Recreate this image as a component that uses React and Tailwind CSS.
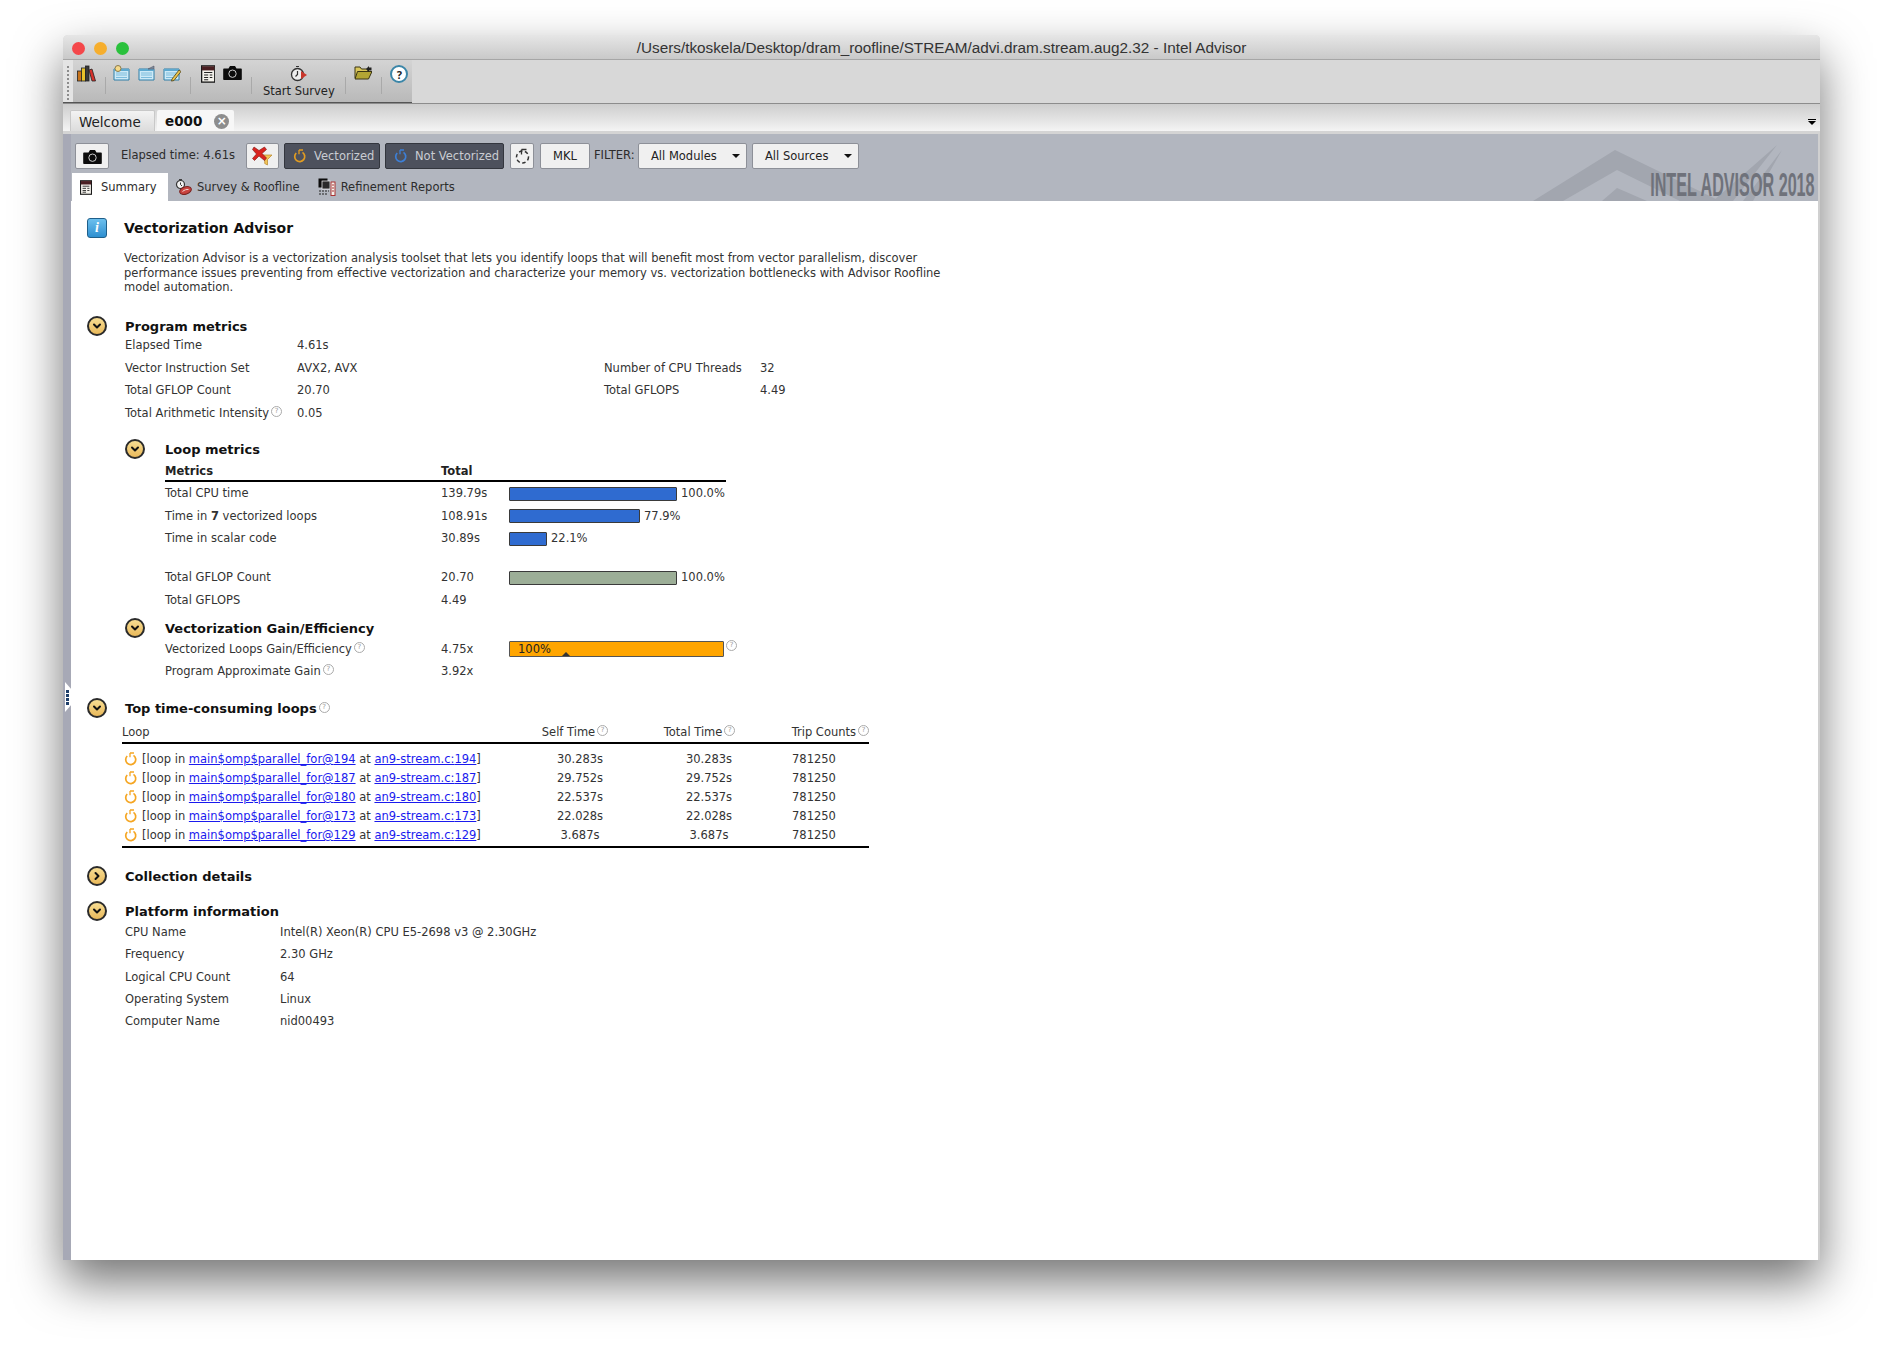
import { ChevronDown, ChevronRight } from "lucide-react";

const sans = "font-['DejaVu_Sans','Liberation_Sans',sans-serif]";

function Toggle({ open = true }) {
  return (
    <span className="-mt-[2px] flex h-[20px] w-[20px] shrink-0 items-center justify-center rounded-full border-2 border-[#2b2b2b] bg-gradient-to-b from-[#f7dd92] to-[#e9b95a]">
      {open ? (
        <ChevronDown size={12} strokeWidth={4} color="#111" />
      ) : (
        <ChevronRight size={12} strokeWidth={4} color="#111" />
      )}
    </span>
  );
}

function Help() {
  return (
    <span className="relative -top-[4px] ml-[2px] inline-flex h-[11px] w-[11px] items-center justify-center rounded-full border border-[#aaa] text-[7px] font-normal leading-none text-[#999]">
      ?
    </span>
  );
}

function LoopIcon({ color = "#f5a623", size = 14 }) {
  return (
    <svg width={size} height={size} viewBox="0 0 14 14" fill="none" stroke={color} strokeWidth="1.7">
      <path d="M9.500 3.400a5 5 0 1 1-6.300 .6" />
      <path d="M6 1h4M6 1v4.300" strokeWidth="1.300" />
    </svg>
  );
}

function RefreshIcon() {
  return (
    <svg width="17" height="17" viewBox="0 0 17 17" fill="none" stroke="#333" strokeWidth="1.500">
      <circle cx="8.500" cy="9" r="6" strokeDasharray="3.500 2.500" />
      <path d="M7.500 1.500h5M7.500 1.500v5" strokeWidth="1.300" />
    </svg>
  );
}

function Books() {
  return (
    <svg width="19" height="17" viewBox="0 0 19 17">
      <rect x="0.5" y="6" width="4" height="10" fill="#c8741c" stroke="#222" strokeWidth=".8" />
      <rect x="4.5" y="3" width="4" height="13" fill="#e8c22a" stroke="#222" strokeWidth=".8" />
      <rect x="8.5" y="1" width="3.5" height="15" fill="#3a3a3a" stroke="#222" strokeWidth=".8" />
      <path d="M12 5l3-1 3.500 12h-3.500z" fill="#d8322c" stroke="#222" strokeWidth=".8" />
    </svg>
  );
}

function ProjectIcon({ variant }) {
  return (
    <svg width="18" height="17" viewBox="0 0 18 17">
      <path d="M1 4h15v11H1z" fill="#cdeaf7" stroke="#2f7fa8" />
      <path d="M1 4h15v2H1z" fill="#5ea9cf" />
      <path d="M3 8h11M3 10h11M3 12.500h11" stroke="#7dbcdc" />
      {variant === 0 && <circle cx="5" cy="3.500" r="3" fill="#f5d98a" stroke="#8a7a4c" />}
      {variant === 1 && <path d="M10 4l6-3v3z" fill="#7c8fa0" stroke="#556" strokeWidth=".6" />}
      {variant === 2 && <path d="M9 14l7-9 2 1.500-7 9-2.500.6z" fill="#eac44a" stroke="#4b4016" strokeWidth=".8" />}
    </svg>
  );
}

function DocIcon({ size = 17 }) {
  return (
    <svg width={size * 0.8} height={size} viewBox="0 0 14 17">
      <rect x=".6" y=".6" width="12.800" height="15.800" fill="#f4f2ec" stroke="#1a1a1a" strokeWidth="1.300" />
      <rect x="1" y="1" width="12" height="4" fill="#4a1f22" />
      <path d="M3 7h8M3 9.500h4M8.500 9.500H11M3 12h4M8.500 12H11M3 14h4" stroke="#222" />
    </svg>
  );
}

function CameraIcon() {
  return (
    <svg width="19" height="15" viewBox="0 0 19 15">
      <path d="M1 3.500h4.500L7 1h5l1.500 2.500H18a.8.8 0 0 1 .8.8v9.900a.8.8 0 0 1-.8.8H1a.8.8 0 0 1-.8-.8V4.300a.8.8 0 0 1 .8-.8z" fill="#0c0c0c" />
      <circle cx="9.500" cy="8.700" r="3.700" fill="#0c0c0c" stroke="#ccc" strokeWidth="1" />
    </svg>
  );
}

function StopwatchIcon() {
  return (
    <svg width="18" height="17" viewBox="0 0 18 17" fill="none">
      <circle cx="7.500" cy="9.500" r="6" fill="#eee" stroke="#333" strokeWidth="1.300" />
      <path d="M7.500 6v3.500l-2 2M6 1.500h3" stroke="#333" strokeWidth="1.200" />
      <path d="M11 6l6 4-6 4z" fill="#c9362b" />
    </svg>
  );
}

function SurveyIcon() {
  return (
    <svg width="17" height="17" viewBox="0 0 17 17" fill="none">
      <circle cx="5.500" cy="5.500" r="4" fill="#f2f2f2" stroke="#333" strokeWidth="1.200" />
      <path d="M5.500 3.500v2l1.500 1.500M4 .6h3" stroke="#333" />
      <ellipse cx="10.500" cy="11.500" rx="6" ry="3.600" transform="rotate(-18 10.500 11.500)" fill="#c9433f" stroke="#7a2320" />
      <path d="M7.500 12.500c2-1.700 4-2.200 6-2" stroke="#f3d3d0" />
    </svg>
  );
}

function ReportsIcon() {
  return (
    <svg width="18" height="18" viewBox="0 0 18 18">
      <rect x="0.5" y="0.5" width="9" height="9" fill="#0c0c0c" />
      <rect x="4" y="3" width="8" height="8" fill="#2a2a2a" stroke="#fff" strokeWidth=".7" />
      <path d="M1 13h10M1 16h9" stroke="#222" strokeWidth="1.200" strokeDasharray="2 1" />
      <rect x="13" y="4" width="4" height="13.500" fill="#f4f2ec" stroke="#a33" />
      <path d="M14 7h2M14 10h2M14 13h2" stroke="#a33" />
    </svg>
  );
}

function FolderIcon() {
  return (
    <svg width="18" height="15" viewBox="0 0 18 15">
      <path d="M1 2h5l1.500 2H14v9H1z" fill="#d9c65c" stroke="#3a3514" />
      <path d="M3.500 6.500H18L14.500 14H1z" fill="#b3a534" stroke="#3a3514" />
      <path d="M12 4l3-3v1.500h2.500v3H15V7z" fill="#222" />
    </svg>
  );
}

function Sep() {
  return <span className="block h-[17px] w-px shrink-0 bg-[#a9a9a9]" />;
}

function Toolbar() {
  return (
    <div className="flex h-[44px] border-b border-[#8c8c8c] bg-[#d8d8d8]">
      <div className="flex w-[349px] shrink-0 border-b border-[#555] bg-gradient-to-b from-[#d4d4d4] to-[#b9b9b9]">
        <div className="flex w-[10px] shrink-0 flex-col items-center gap-[2px] bg-[#e4e4e4] pt-[6px]">
          {[0, 1, 2, 3, 4, 5, 6, 7, 8].map((i) => (
            <span key={i} className="h-[2px] w-[2px] bg-[#8c8c8c]" />
          ))}
        </div>
        <div className="flex items-start pl-[4px] pt-[5px]">
          <Books />
          <div className="ml-[9px] mt-[12px]"><Sep /></div>
          <div className="ml-[7px] flex gap-[7px]">
            <ProjectIcon variant={0} />
            <ProjectIcon variant={1} />
            <ProjectIcon variant={2} />
          </div>
          <div className="ml-[9px] mt-[12px]"><Sep /></div>
          <div className="ml-[10px]"><DocIcon size={18} /></div>
          <div className="ml-[8px]"><CameraIcon /></div>
          <div className="ml-[9px] mt-[12px]"><Sep /></div>
          <div className="flex w-[93px] flex-col items-center">
            <StopwatchIcon />
            <span className={`${sans} mt-[2px] text-[11.500px] leading-[14px] text-[#222]`}>Start Survey</span>
          </div>
          <div className="mt-[12px]"><Sep /></div>
          <div className="ml-[8px]"><FolderIcon /></div>
          <div className="ml-[9px] mt-[12px]"><Sep /></div>
          <span className="ml-[8px] flex h-[18px] w-[18px] items-center justify-center rounded-full border-2 border-[#3b86a8] bg-white text-[11px] font-bold leading-none text-[#222]">
            ?
          </span>
        </div>
      </div>
    </div>
  );
}

function Tabs() {
  return (
    <div className="flex h-[30px] items-end justify-between border-b-[3px] border-[#d4d4d4] bg-gradient-to-b from-[#cdcdcd] to-[#f4f4f4] pl-[7px] pr-[4px]">
      <div className="flex gap-[2px]">
        <div className={`${sans} flex h-[21px] w-[85px] items-center rounded-t-[2px] border border-b-0 border-[#c8c8c8] bg-gradient-to-b from-[#f3f3f3] to-[#dcdcdc] pl-[8px] pt-[2px] text-[13.500px] text-[#222]`}>
          Welcome
        </div>
        <div className={`${sans} flex h-[21px] w-[77px] items-center gap-[12px] rounded-t-[2px] bg-[#f7f7f7] pl-[8px] pt-[1px] text-[13.500px] font-bold text-[#111]`}>
          e000
          <span className="flex h-[15px] w-[15px] items-center justify-center rounded-full bg-[#8d8d8d] text-[12px] font-bold leading-none text-white">×</span>
        </div>
      </div>
      <div className="mb-[6px] flex flex-col items-center gap-[1px]">
        <span className="h-[1px] w-[8px] bg-black" />
        <span className="h-0 w-0 border-x-[4px] border-t-[4px] border-x-transparent border-t-black" />
      </div>
    </div>
  );
}

function Btn({ className, children }) {
  return (
    <div className={`flex h-[26px] items-center justify-center rounded-[2px] border border-[#8d9098] bg-[#f0f0f0] ${className}`}>
      {children}
    </div>
  );
}

function FilterFunnel() {
  return (
    <svg width="21" height="20" viewBox="0 0 21 20">
      <path d="M8 9h12l-4.500 4.500V19l-2.800-1.500v-4z" fill="#f2c458" stroke="#b7862a" strokeWidth=".7" />
      <path d="M2 1l5 3.500L12.500 1l2 2.500-4.500 4 4.500 4.500-2 2.500L7 10l-4.500 4.500-2-2L4.500 8 .5 3.500z" fill="#d9231f" stroke="#7a1512" strokeWidth=".6" />
    </svg>
  );
}

function Dropdown({ label, className }) {
  return (
    <Btn className={`${className} pl-[12px] pr-[6px] text-[11.500px] text-[#222]`}>
      <span className={`${sans} pt-[1px]`}>{label}</span>
      <span className="ml-auto h-0 w-0 border-x-[4px] border-t-[4px] border-x-transparent border-t-[#111]" />
    </Btn>
  );
}

function Logo() {
  return (
    <div className="pointer-events-none absolute bottom-0 right-0 h-[67px] w-[300px]">
      <svg className="absolute inset-0" width="300" height="67" viewBox="0 0 300 67" fill="none">
        <path d="M15 67L97 16L202 67H162L99 36L45 67z" fill="#a2a6af" />
        <path d="M84 67L99 54L129 67z" fill="#a2a6af" />
        <path d="M259 11L195 67H215zM264 16L225 67H235z" fill="#a2a6af" />
      </svg>
      <span className="absolute bottom-[0px] right-[3px] origin-right scale-x-[0.49] whitespace-nowrap font-['Liberation_Sans',sans-serif] text-[33px] font-bold leading-none text-[#6f727b]">
        INTEL ADVISOR 2018
      </span>
    </div>
  );
}

function ResultBar() {
  return (
    <div className="relative h-[67px] bg-[#b2b6bf]">
      <Logo />
      <div className="flex h-[35px] items-end pl-[4px]">
        <Btn className="w-[34px]"><CameraIcon /></Btn>
        <span className={`${sans} ml-[12px] w-[125px] self-end pb-[5px] text-[11.500px] text-[#2c2c2c]`}>Elapsed time: 4.61s</span>
        <Btn className="w-[33px]"><FilterFunnel /></Btn>
        <div className={`${sans} ml-[5px] flex h-[26px] w-[96px] items-center gap-[7px] rounded-[2px] border border-[#33363e] bg-[#4d515d] pl-[8px] text-[11.500px] text-[#c9ccd2]`}>
          <LoopIcon color="#e19c22" /> <span className="pt-[2px]">Vectorized</span>
        </div>
        <div className={`${sans} ml-[5px] flex h-[26px] w-[119px] items-center gap-[7px] rounded-[2px] border border-[#33363e] bg-[#4d515d] pl-[8px] text-[11.500px] text-[#c9ccd2]`}>
          <LoopIcon color="#3d7fd6" /> <span className="pt-[2px]">Not Vectorized</span>
        </div>
        <Btn className="ml-[6px] w-[24px]"><RefreshIcon /></Btn>
        <Btn className={`${sans} ml-[6px] w-[50px] pt-[1px] text-[11.500px] text-[#222]`}>MKL</Btn>
        <span className={`${sans} ml-[4px] w-[44px] self-end pb-[5px] text-[11.500px] text-[#2c2c2c]`}>FILTER:</span>
        <Dropdown label="All Modules" className="w-[109px]" />
        <Dropdown label="All Sources" className="ml-[5px] w-[107px]" />
      </div>
      <div className={`${sans} relative mt-[4px] flex h-[28px] items-center pl-[1px] text-[11.500px] text-[#2c2c2c]`}>
        <div className="flex h-[28px] w-[96px] items-center bg-white pl-[8px]">
          <DocIcon size={15} />
          <span className="ml-[9px] pt-[2px]">Summary</span>
        </div>
        <div className="ml-[7px] flex items-center">
          <SurveyIcon />
          <span className="ml-[5px] pt-[2px]">Survey &amp; Roofline</span>
        </div>
        <div className="ml-[18px] flex items-center">
          <ReportsIcon />
          <span className="ml-[5px] pt-[2px]">Refinement Reports</span>
        </div>
      </div>
    </div>
  );
}

function Heading({ children, className = "" }) {
  return <h2 className={`${sans} text-[13px] font-bold leading-[18px] text-[#111] ${className}`}>{children}</h2>;
}

function Row({ label, value, children, labelClass = "w-[172px]" }) {
  return (
    <div className="flex h-[22.4px] items-center">
      <span className={`${labelClass} shrink-0`}>{label}</span>
      <span className="w-[307px] shrink-0">{value}</span>
      {children}
    </div>
  );
}

function Bar({ width, color = "bg-[#2f6bd0]", pct }) {
  return (
    <div className="flex items-center">
      <span className={`h-[14px] rounded-[1px] border border-[#3a3a3a] ${color}`} style={{ width }} />
      <span className="ml-[4px]">{pct}</span>
    </div>
  );
}

function MetricRow({ label, value, bar }) {
  return (
    <div className="flex h-[22.7px] items-center">
      <span className="w-[276px] shrink-0">{label}</span>
      <span className="w-[68px] shrink-0">{value}</span>
      {bar}
    </div>
  );
}

const loops = [
  ["194", "30.283s"],
  ["187", "29.752s"],
  ["180", "22.537s"],
  ["173", "22.028s"],
  ["129", "3.687s"],
];

function LoopsTable() {
  return (
    <div className="ml-[35px] mt-[4px] w-[747px]">
      <div className="flex h-[22px] items-center whitespace-nowrap border-b-2 border-black">
        <span className="w-[420px]">Loop</span>
        <span className="w-[122px]">Self Time<Help /></span>
        <span className="w-[128px]">Total Time<Help /></span>
        <span>Trip Counts<Help /></span>
      </div>
      <div className="border-b-2 border-black pb-[1px] pt-[6px]">
        {loops.map(([line, time]) => (
          <div key={line} className="flex h-[19px] items-center">
            <span className="-mt-[2px] ml-[2px] w-[18px] shrink-0"><LoopIcon /></span>
            <span className="w-[400px] shrink-0 text-[#333]">
              [loop in <a className="text-[#1a1aee] underline">main$omp$parallel_for@{line}</a> at{" "}
              <a className="text-[#1a1aee] underline">an9-stream.c:{line}</a>]
            </span>
            <span className="w-[122px] shrink-0"><span className="block w-[76px] text-center">{time}</span></span>
            <span className="w-[128px] shrink-0"><span className="block w-[90px] text-center">{time}</span></span>
            <span>781250</span>
          </div>
        ))}
      </div>
    </div>
  );
}

function Content() {
  return (
    <div className={`${sans} flex-1 bg-white pl-[16px] pt-[17px] text-[11.500px] text-[#333]`}>
      <div className="flex items-center">
        <span className="flex h-[20px] w-[20px] items-center justify-center rounded-[3px] border border-[#1f5f8a] bg-gradient-to-b from-[#6cc0ee] to-[#2c8fd0] font-['Liberation_Serif',serif] text-[14px] font-bold italic leading-none text-white">i</span>
        <h1 className="ml-[17px] text-[14px] font-bold leading-[18px] text-[#111]">Vectorization Advisor</h1>
      </div>
      <p className="ml-[37px] mt-[13px] w-[840px] leading-[14.6px]">
        Vectorization Advisor is a vectorization analysis toolset that lets you identify loops that will benefit most from vector parallelism, discover performance issues preventing from effective vectorization and characterize your memory vs. vectorization bottlenecks with Advisor Roofline model automation.
      </p>

      <div className="mt-[23px] flex items-center">
        <Toggle />
        <Heading className="ml-[18px]">Program metrics</Heading>
      </div>
      <div className="-mt-[1px] ml-[38px]">
        <Row label="Elapsed Time" value="4.61s" />
        <Row label="Vector Instruction Set" value="AVX2, AVX">
          <span className="w-[156px]">Number of CPU Threads</span>
          <span>32</span>
        </Row>
        <Row label="Total GFLOP Count" value="20.70">
          <span className="w-[156px]">Total GFLOPS</span>
          <span>4.49</span>
        </Row>
        <Row label={<>Total Arithmetic Intensity<Help /></>} value="0.05" />
      </div>

      <div className="ml-[38px] mt-[17px] flex items-center">
        <Toggle />
        <Heading className="ml-[20px]">Loop metrics</Heading>
      </div>
      <div className="ml-[78px] w-[561px]">
        <div className="mt-[3px] flex h-[20px] items-center border-b-2 border-black font-bold text-[#222]">
          <span className="w-[276px]">Metrics</span>
          <span>Total</span>
        </div>
        <MetricRow label="Total CPU time" value="139.79s" bar={<Bar width={168} pct="100.0%" />} />
        <MetricRow label={<>Time in <b>7</b> vectorized loops</>} value="108.91s" bar={<Bar width={131} pct="77.9%" />} />
        <MetricRow label="Time in scalar code" value="30.89s" bar={<Bar width={38} pct="22.1%" />} />
        <div className="h-[16px]" />
        <MetricRow label="Total GFLOP Count" value="20.70" bar={<Bar width={168} color="bg-[#9cae97]" pct="100.0%" />} />
        <MetricRow label="Total GFLOPS" value="4.49" />
      </div>

      <div className="ml-[38px] mt-[8px] flex items-center">
        <Toggle />
        <Heading className="ml-[20px]">Vectorization Gain/Efficiency</Heading>
      </div>
      <div className="ml-[78px]">
        <MetricRow
          label={<>Vectorized Loops Gain/Efficiency<Help /></>}
          value="4.75x"
          bar={
            <div className="flex items-center">
              <div className="relative flex h-[16px] w-[215px] items-center rounded-[1px] border border-[#555] bg-[#ffa500] pl-[8px] text-[#222]">
                100%
                <span className="absolute bottom-0 left-[52px] h-0 w-0 border-x-[4px] border-b-[4px] border-x-transparent border-b-[#333]" />
              </div>
              <Help />
            </div>
          }
        />
        <MetricRow label={<>Program Approximate Gain<Help /></>} value="3.92x" />
      </div>

      <div className="mt-[17px] flex items-center">
        <Toggle />
        <Heading className="ml-[18px]">Top time-consuming loops<Help /></Heading>
      </div>
      <LoopsTable />

      <div className="mt-[20px] flex items-center">
        <Toggle open={false} />
        <Heading className="ml-[18px]">Collection details</Heading>
      </div>
      <div className="mt-[17px] flex items-center">
        <Toggle />
        <Heading className="ml-[18px]">Platform information</Heading>
      </div>
      <div className="ml-[38px]">
        <Row labelClass="w-[155px]" label="CPU Name" value="Intel(R) Xeon(R) CPU E5-2698 v3 @ 2.30GHz" />
        <Row labelClass="w-[155px]" label="Frequency" value="2.30 GHz" />
        <Row labelClass="w-[155px]" label="Logical CPU Count" value="64" />
        <Row labelClass="w-[155px]" label="Operating System" value="Linux" />
        <Row labelClass="w-[155px]" label="Computer Name" value="nid00493" />
      </div>
    </div>
  );
}

export default function App() {
  return (
    <div className="h-[1350px] w-[1884px] bg-white pl-[63px] pt-[35px]">
      <div className="relative flex h-[1225px] w-[1757px] flex-col rounded-t-[5px] bg-[#d8d8d8] shadow-[0_22px_48px_rgba(0,0,0,0.55)]">
        <div className="flex h-[25px] items-center justify-center rounded-t-[5px] border-b border-[#a6a6a6] bg-gradient-to-b from-[#e6e6e6] to-[#c9c9c9] pt-[2px]">
          <div className="absolute left-[9px] top-[7px] flex gap-[9px]">
            <span className="h-[13px] w-[13px] rounded-full bg-[#f4474a]" />
            <span className="h-[13px] w-[13px] rounded-full bg-[#f6ae2d]" />
            <span className="h-[13px] w-[13px] rounded-full bg-[#2ac13c]" />
          </div>
          <span className="font-['Liberation_Sans',sans-serif] text-[15.300px] text-[#333]">
            /Users/tkoskela/Desktop/dram_roofline/STREAM/advi.dram.stream.aug2.32 - Intel Advisor
          </span>
        </div>
        <Toolbar />
        <Tabs />
        <div className="flex min-h-0 flex-1 flex-col border-r-2 border-[#d0d0d0] pl-[8px]">
          <div className="absolute bottom-0 left-0 top-[99px] w-[8px] bg-[#a7a9b6]" />
          <svg className="absolute left-[2px] top-[647px]" width="7" height="30" viewBox="0 0 7 30">
            <path d="M0 0L7 8V22L0 30z" fill="#fff" />
            <path d="M1 8h3v3H1zM1 12h3v3H1zM1 16h3v3H1zM1 20h3v3H1z" fill="#1f3f6a" />
          </svg>
          <ResultBar />
          <Content />
        </div>
      </div>
    </div>
  );
}
